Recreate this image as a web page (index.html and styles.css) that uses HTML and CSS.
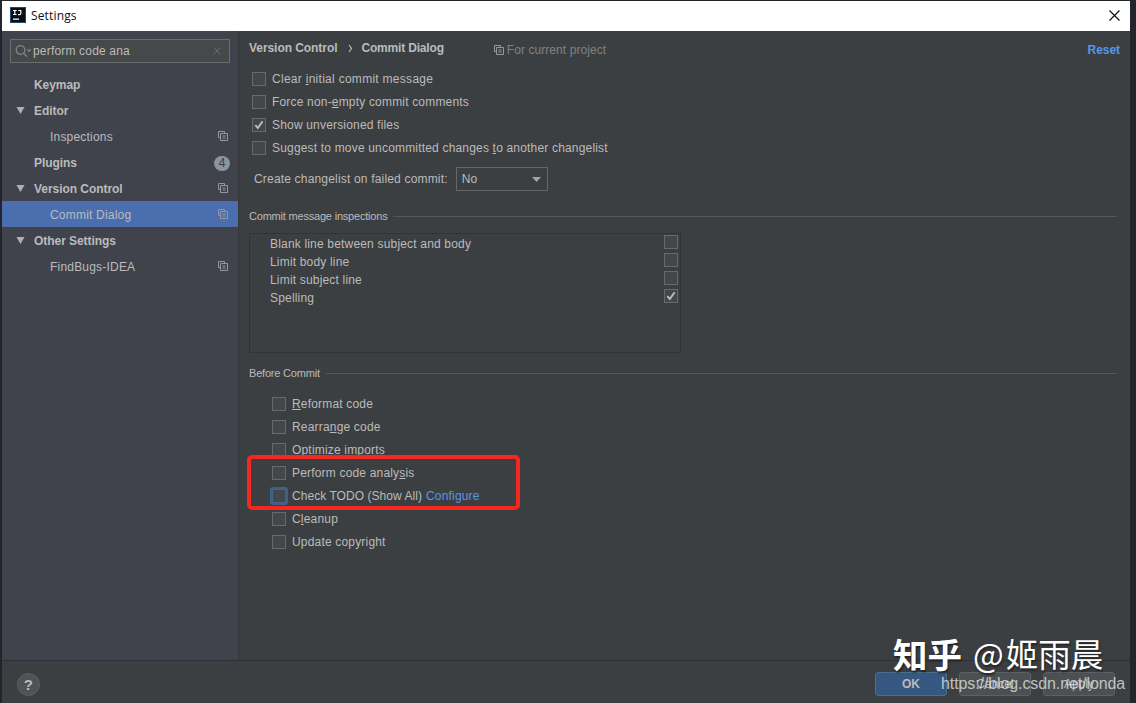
FILE: index.html
```html
<!DOCTYPE html>
<html lang="en">
<head>
  <meta charset="UTF-8" />
  <title>Settings</title>
  <link rel="stylesheet" href="styles.css">
</head>
<body>
  <svg class="defs" width="0" height="0">
    <symbol id="copy" viewBox="0 0 10 10">
      <path d="M2.5 6.5h-2v-6h6v2M2.5 2.5h7v7h-7zM4.5 5h3M4.5 7h3" fill="none" stroke="currentColor"/>
    </symbol>
    <symbol id="arrow" viewBox="0 0 10 9">
      <path d="M0.5 0.5h9L5 8.5z" fill="currentColor"/>
    </symbol>
    <symbol id="check" viewBox="0 0 12 12">
      <path d="M2.3 6.2L4.8 9L9.6 2.4" fill="none" stroke="currentColor" stroke-width="1.9"/>
    </symbol>
  </svg>

  <div class="window">
    <header class="titlebar">
      <svg class="logo" width="16" height="16" viewBox="0 0 16 16">
        <rect width="16" height="16" fill="#1d4a72"/>
        <rect x="1" y="1" width="14" height="14" fill="#080d16"/>
        <path d="M3 3.5h3.6M4.8 3.5v4M3 7.5h3.6M8.2 3.5h2.6v3q0 1.2-1.4 1.2H8M3 12.2h6" fill="none" stroke="#fff" stroke-width="1.2"/>
      </svg>
      <span class="title">Settings</span>
      <svg class="close" width="11" height="11" viewBox="0 0 11 11">
        <path d="M0.5 0.5l10 10M10.5 0.5l-10 10" stroke="#111" stroke-width="1.2"/>
      </svg>
    </header>

    <div class="main">
      <aside class="sidebar">
        <div class="search">
          <svg width="17" height="14" viewBox="0 0 17 14">
            <circle cx="5.5" cy="6" r="4.3" fill="none" stroke="#85898c" stroke-width="1.2"/>
            <path d="M8.6 9.2L12 12.6" stroke="#85898c" stroke-width="1.3"/>
            <path d="M11.5 5.5h5L14 8.3z" fill="#85898c"/>
          </svg>
          <span class="query">perform code ana</span>
          <svg width="8" height="8" viewBox="0 0 8 8">
            <path d="M0.5 0.5l7 7M7.5 0.5l-7 7" stroke="#6a6e70"/>
          </svg>
        </div>
        <nav class="tree">
          <div class="node"><span class="name">Keymap</span></div>
          <div class="node"><svg class="arrow"><use href="#arrow"/></svg><span class="name">Editor</span></div>
          <div class="node child"><span class="name">Inspections</span><svg class="copy"><use href="#copy"/></svg></div>
          <div class="node"><span class="name">Plugins</span><span class="count">4</span></div>
          <div class="node"><svg class="arrow"><use href="#arrow"/></svg><span class="name">Version Control</span><svg class="copy"><use href="#copy"/></svg></div>
          <div class="node child selected"><span class="name">Commit Dialog</span><svg class="copy"><use href="#copy"/></svg></div>
          <div class="node"><svg class="arrow"><use href="#arrow"/></svg><span class="name">Other Settings</span></div>
          <div class="node child"><span class="name">FindBugs-IDEA</span><svg class="copy"><use href="#copy"/></svg></div>
        </nav>
      </aside>

      <section class="content">
        <div class="heading">
          <span class="crumb">Version Control</span>
          <svg class="sep" width="5" height="9" viewBox="0 0 5 9"><path d="M1 1l2.5 3.5L1 8" fill="none" stroke="#bbb" stroke-width="1.2"/></svg>
          <span class="crumb last">Commit Dialog</span>
          <span class="scope"><svg class="copy"><use href="#copy"/></svg>For current project</span>
          <a class="reset">Reset</a>
        </div>

        <div class="options">
          <label class="option"><i class="box"></i><span class="wide">Clear <u>i</u>nitial commit message</span></label>
          <label class="option"><i class="box"></i><span>Force non-<u>e</u>mpty commit comments</span></label>
          <label class="option"><i class="box"><svg><use href="#check"/></svg></i><span>Show unversioned files</span></label>
          <label class="option"><i class="box"></i><span>Suggest to move uncommitted changes <u>t</u>o another changelist</span></label>
        </div>

        <div class="failed">
          <span>Create changelist on failed commit:</span>
          <div class="select"><span>No</span><svg width="9" height="5" viewBox="0 0 9 5"><path d="M0 0h9L4.5 5z" fill="#a2a5a7"/></svg></div>
        </div>

        <h2 class="group">Commit message inspections</h2>
        <div class="inspection-list">
          <div class="inspection"><span>Blank line between subject and body</span><i class="box"></i></div>
          <div class="inspection"><span>Limit body line</span><i class="box"></i></div>
          <div class="inspection"><span>Limit subject line</span><i class="box"></i></div>
          <div class="inspection"><span>Spelling</span><i class="box"><svg><use href="#check"/></svg></i></div>
        </div>

        <h2 class="group before">Before Commit</h2>
        <div class="options commit">
          <label class="option"><i class="box"></i><span><u>R</u>eformat code</span></label>
          <label class="option"><i class="box"></i><span>Rearra<u>n</u>ge code</span></label>
          <label class="option"><i class="box"></i><span><u>O</u>ptimize imports</span></label>
          <label class="option"><i class="box"></i><span>Perform code analy<u>s</u>is</span></label>
          <label class="option"><i class="box focus"></i><span class="todo">Check TODO (Show All)</span><a>Configure</a></label>
          <label class="option"><i class="box"></i><span>C<u>l</u>eanup</span></label>
          <label class="option"><i class="box"></i><span>Update copyright</span></label>
          <div class="marker"></div>
        </div>
      </section>
    </div>

    <footer class="footer">
      <span class="help">?</span>
      <button class="ok">OK</button>
      <button>Cancel</button>
      <button>Apply</button>
    </footer>
  </div>

  <div class="watermark"><b>知乎</b><span class="at">@</span><span>姬雨晨</span></div>
  <div class="blog-url">https://blog.csdn.net/londa</div>
</body>
</html>
```
FILE: styles.css
```css
:root {
  --bg: #3c3f41;
  --side: #40434c;
  --text: #bbbbbb;
  --blue: #4b6eaf;
  --link: #5896e8;
}
* { box-sizing: border-box; }
body {
  margin: 0;
  height: 703px;
  padding: 1px 6px 0 2px;
  overflow: hidden;
  background: #22252a;
  color: var(--text);
  font: 12px/18px "Liberation Sans", Arial, sans-serif;
  letter-spacing: 0.18px;
  white-space: nowrap;
}
svg { display: block; flex: none; }
.defs { position: absolute; }
.window {
  height: 702px;
  display: flex;
  flex-direction: column;
  background: var(--bg);
}
.titlebar {
  height: 30px;
  flex: none;
  display: flex;
  align-items: center;
  padding: 0 10px 2px 8px;
  background: #fff;
  color: #111;
}
.title {
  margin-left: 5px;
  padding-top: 2px;
  font: 12px/18px "Open Sans", sans-serif;
  letter-spacing: 0.15px;
}
.close { margin-left: auto; }
.main {
  height: 629px;
  flex: none;
  display: flex;
}
.sidebar {
  width: 237px;
  flex: none;
  padding-top: 8px;
  background: var(--side);
  border-right: 1px solid #35383b;
}
.search {
  height: 24px;
  margin: 0 8px;
  padding: 0 8px 0 4px;
  display: flex;
  align-items: center;
  background: #45494a;
  border: 1px solid #6b6e70;
}
.query { flex: 1; margin-left: 1px; }
.tree { margin-top: 8px; }
.node {
  height: 26px;
  display: flex;
  align-items: center;
  padding: 0 10px 0 32px;
  font-weight: bold;
  letter-spacing: -0.05px;
}
.name { padding-top: 2px; }
.child {
  padding-left: 48px;
  font-weight: normal;
  letter-spacing: 0.2px;
}
.node .arrow { margin: 0 9px 0 -18px; }
.node .copy { margin-left: auto; }
.arrow { width: 9px; height: 9px; color: #adafb1; }
.copy { width: 10px; height: 10px; color: #9497a0; }
.selected { background: var(--blue); }
.count {
  width: 16px;
  height: 15px;
  margin: 2px -2px 0 auto;
  border-radius: 8px;
  background: #8c949c;
  color: #3b4048;
  font-weight: normal;
  line-height: 15px;
  text-align: center;
}
.content { flex: 1; padding: 8px 10px 0; }
.heading {
  height: 18px;
  display: flex;
  align-items: center;
  font-weight: bold;
  letter-spacing: -0.06px;
}
.last { letter-spacing: -0.18px; }
.sep { margin: 0 8px 0 11px; }
.scope {
  display: flex;
  align-items: center;
  gap: 3px;
  margin: 4px 0 0 50px;
  color: #7f8284;
  font-weight: normal;
  letter-spacing: 0.07px;
}
.reset { margin: 4px 0 0 auto; color: var(--link); }
.options { padding: 10px 0 0 3px; }
.option {
  height: 23px;
  display: flex;
  align-items: center;
}
.wide { letter-spacing: 0.28px; }
.box {
  width: 14px;
  height: 14px;
  flex: none;
  margin-right: 6px;
  background: #43474a;
  border: 1px solid #676a6c;
}
.box svg { width: 12px; height: 12px; }
.focus {
  border-color: #44658c;
  border-radius: 1px;
  box-shadow: 0 0 0 2px #3d6185;
}
.failed {
  display: flex;
  align-items: center;
  margin: 8px 0 0 5px;
}
.select {
  width: 92px;
  height: 24px;
  margin-left: 8px;
  padding: 0 6px 0 5px;
  display: flex;
  align-items: center;
  justify-content: space-between;
  border: 1px solid #646769;
}
.group {
  display: flex;
  align-items: center;
  height: 18px;
  margin: 16px 3px 0 0;
  font-size: 11px;
  font-weight: normal;
  letter-spacing: -0.2px;
}
.group::after {
  content: "";
  flex: 1;
  height: 1px;
  margin-left: 6px;
  background: #54575a;
}
.inspection-list {
  width: 432px;
  height: 120px;
  margin-top: 8px;
  padding: 1px 2px 0 20px;
  border: 1px solid #313436;
}
.inspection {
  height: 18px;
  display: flex;
  align-items: flex-start;
  justify-content: space-between;
}
.inspection .box { margin-right: 0; }
.before { margin-top: 11px; }
.commit { position: relative; padding-left: 23px; }
.option a { margin-left: 4px; color: var(--link); }
.todo { letter-spacing: 0.05px; }
.marker {
  position: absolute;
  left: -2px;
  top: 73px;
  width: 273px;
  height: 55px;
  border: 4px solid #f3281e;
  border-radius: 5px;
}
.footer {
  flex: 1;
  display: flex;
  align-items: center;
  padding: 4px 15px 0 15px;
  border-top: 1px solid #2f3234;
}
.help {
  width: 23px;
  height: 23px;
  margin-right: auto;
  border: 1px solid #5e6163;
  border-radius: 50%;
  background: #505355;
  font: bold 15px/21px "Liberation Sans", sans-serif;
  text-align: center;
}
button {
  width: 72px;
  height: 24px;
  margin-left: 12px;
  padding: 0;
  border: 1px solid #5e6163;
  border-radius: 3px;
  background: #4c5052;
  color: var(--text);
  font: 12px "Liberation Sans", sans-serif;
}
.ok {
  background: #365880;
  border-color: #4c708c;
  font-weight: bold;
}
.watermark {
  position: absolute;
  left: 893px;
  top: 630px;
  display: flex;
  color: #fff;
  font: 32.5px/46px "Noto Sans CJK SC", sans-serif;
  letter-spacing: 0;
  text-shadow: 1px 2px 2px #222;
}
.watermark b { font-size: 34.5px; }
.at { margin: 0 2px 0 11px; }
.blog-url {
  position: absolute;
  left: 941px;
  top: 674px;
  color: rgba(225, 225, 225, 0.8);
  font-size: 16px;
  line-height: 20px;
  letter-spacing: -0.1px;
}
```
